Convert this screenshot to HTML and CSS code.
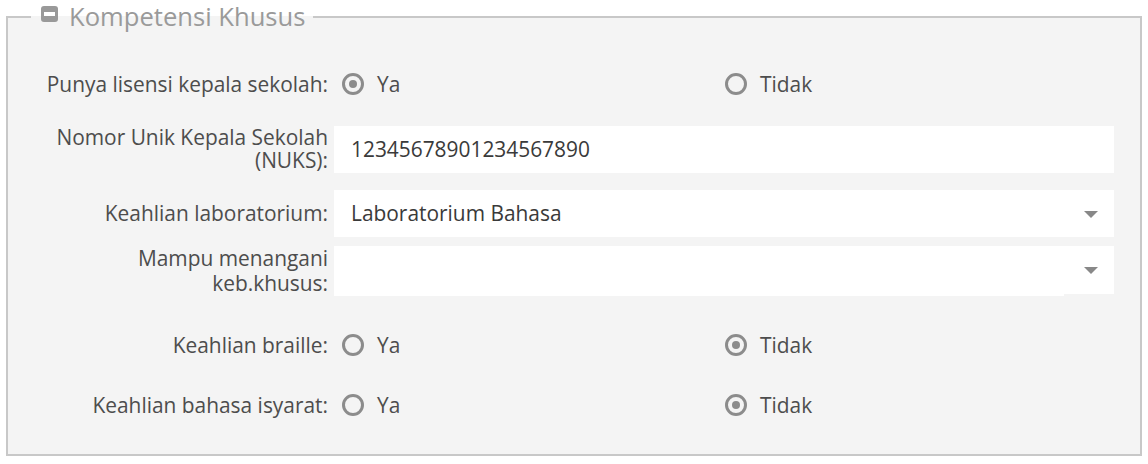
FILE: index.html
```html
<!DOCTYPE html>
<html lang="id">
<head>
  <meta charset="UTF-8">
  <meta name="viewport" content="width=device-width, initial-scale=1.0">
  <title>Kompetensi Khusus</title>
  <link rel="stylesheet" href="styles.css">
</head>
<body>
  <fieldset class="panel">
    <legend class="panel-title">
      <span class="toggle-icon"></span>
      Kompetensi Khusus
    </legend>

    <div class="row row-radio first">
      <label class="row-label">Punya lisensi kepala sekolah:</label>
      <div class="radio-group">
        <label class="radio"><span class="radio-dot checked"></span>Ya</label>
        <label class="radio"><span class="radio-dot"></span>Tidak</label>
      </div>
    </div>

    <div class="row row-input">
      <label class="row-label top">Nomor Unik Kepala Sekolah (NUKS):</label>
      <div class="field">12345678901234567890</div>
    </div>

    <div class="row row-select">
      <label class="row-label">Keahlian laboratorium:</label>
      <div class="field select">Laboratorium Bahasa<span class="caret"></span></div>
    </div>

    <div class="row row-multi">
      <label class="row-label top">Mampu menangani keb.khusus:</label>
      <div class="field select multi"><span class="search"></span><span class="caret"></span></div>
    </div>

    <div class="row row-radio gap-lg">
      <label class="row-label">Keahlian braille:</label>
      <div class="radio-group">
        <label class="radio"><span class="radio-dot"></span>Ya</label>
        <label class="radio"><span class="radio-dot checked"></span>Tidak</label>
      </div>
    </div>

    <div class="row row-radio gap-sm">
      <label class="row-label">Keahlian bahasa isyarat:</label>
      <div class="radio-group">
        <label class="radio"><span class="radio-dot"></span>Ya</label>
        <label class="radio"><span class="radio-dot checked"></span>Tidak</label>
      </div>
    </div>
  </fieldset>
</body>
</html>
```

FILE: styles.css
```css
body {
  margin: 0;
  padding: 0 6px;
  background: #fff;
  font-family: "Open Sans", Arial, sans-serif;
  color: #4d4d4d;
}

.panel {
  margin: 0;
  padding: 0 26px 25px 0;
  border: 2px solid #c8c8c8;
  background-color: #f4f4f4;
  min-width: 0;
}

.panel-title {
  margin-left: 23px;
  padding: 0 8px 0 10px;
  font-size: 25.6px;
  line-height: 34px;
  color: #9a9a9a;
  display: flex;
  align-items: center;
}

.toggle-icon {
  position: relative;
  width: 17px;
  height: 16px;
  margin-right: 11px;
  margin-top: -6px;
  background: #999;
  border-radius: 3px;
}

.toggle-icon::after {
  content: "";
  position: absolute;
  left: 3px;
  right: 3px;
  top: 6px;
  height: 4px;
  background: #fff;
}

.row {
  display: grid;
  grid-template-columns: 320px 1fr;
  column-gap: 6px;
  font-size: 20.9px;
}

.row-label {
  padding-left: 36px;
  text-align: right;
  align-self: center;
  line-height: 23px;
}

.row-label.top {
  align-self: start;
}

.row-multi .row-label {
  line-height: 25px;
}

.row-radio {
  height: 48px;
}

.row-radio.first {
  margin-top: 26px;
}

.row-radio.gap-lg {
  margin-top: 25px;
}

.row-radio.gap-sm {
  margin-top: 12px;
}

.row-input {
  margin-top: 18px;
}

.row-select {
  margin-top: 17px;
}

.row-multi {
  margin-top: 9px;
}

.radio-group {
  display: grid;
  grid-template-columns: 383px 1fr;
  padding-left: 8px;
  align-items: center;
}

.radio {
  display: flex;
  align-items: center;
}

.radio-dot {
  box-sizing: border-box;
  width: 22px;
  height: 22px;
  margin-right: 13px;
  border: 3px solid #8c8c8c;
  border-radius: 50%;
  position: relative;
}

.radio-dot.checked::after {
  content: "";
  position: absolute;
  left: 4px;
  top: 4px;
  width: 8px;
  height: 8px;
  border-radius: 50%;
  background: #8c8c8c;
}

.field {
  position: relative;
  height: 47px;
  line-height: 47px;
  padding-left: 17px;
  background: #fff;
  color: #3a3a3a;
}

.field.multi {
  height: 48px;
}

.search {
  position: absolute;
  left: 0;
  top: 0;
  width: calc(100% - 50px);
  height: 50px;
  background: #fff;
}

.caret {
  position: absolute;
  right: 16px;
  top: 21px;
  border-left: 7px solid transparent;
  border-right: 7px solid transparent;
  border-top: 7px solid #888;
}
```
